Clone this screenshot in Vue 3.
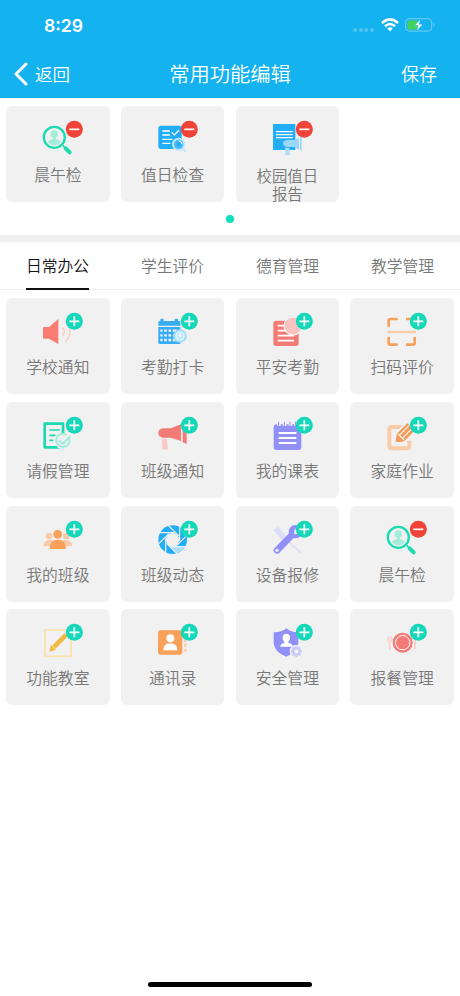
<script setup>
import { h } from 'vue'

const favourites = [
  { name: '晨午检', icon: 'magnifier', added: true },
  { name: '值日检查', icon: 'checklist', added: true },
  { name: '校园值日报告', icon: 'report', added: true },
]

const tabs = ['日常办公', '学生评价', '德育管理', '教学管理']

const features = [
  { name: '学校通知', icon: 'speaker' },
  { name: '考勤打卡', icon: 'calendar' },
  { name: '平安考勤', icon: 'safety' },
  { name: '扫码评价', icon: 'scan' },
  { name: '请假管理', icon: 'leave' },
  { name: '班级通知', icon: 'horn' },
  { name: '我的课表', icon: 'timetable' },
  { name: '家庭作业', icon: 'homework' },
  { name: '我的班级', icon: 'people' },
  { name: '班级动态', icon: 'aperture' },
  { name: '设备报修', icon: 'wrench' },
  { name: '晨午检', icon: 'magnifier', added: true },
  { name: '功能教室', icon: 'classroom' },
  { name: '通讯录', icon: 'contacts' },
  { name: '安全管理', icon: 'shield' },
  { name: '报餐管理', icon: 'meal' },
]

const p = (d, fill) => ['path', { d, fill }]
const s = (d, stroke, w, cap = 'butt') => [
  'path',
  { d, fill: 'none', stroke, 'stroke-width': w, 'stroke-linecap': cap, 'stroke-linejoin': 'round' },
]
const c = (cx, cy, r, fill) => ['circle', { cx, cy, r, fill }]
const o = (cx, cy, r, stroke, w, fill = 'none') => ['circle', { cx, cy, r, fill, stroke, 'stroke-width': w }]
const r = (x, y, width, height, rx, fill) => ['rect', { x, y, width, height, rx, fill }]
const bg = '#f1f1f1'

// Edges of the eight shutter blades, tangent to the central opening.
const blades = Array.from({ length: 8 }, (_, k) => {
  const a = (k * Math.PI) / 4
  const x = 47 + 21 * Math.cos(a)
  const y = 71 + 21 * Math.sin(a)
  const dx = Math.sin(a)
  const dy = -Math.cos(a)
  return `M${x - 5 * dx} ${y - 5 * dy}L${x + 39 * dx} ${y + 39 * dy}`
}).join('')

// All icons are drawn on a 144-unit canvas shown at 48px.
const icons = {
  magnifier: [
    o(37, 64, 31.5, '#1adbb0', 7),
    c(37, 54, 11, '#a3ecda'),
    p('M32 60h10v10c9 2 14 5 14 9q-8 9-19 9t-19-9c0-4 5-7 14-9z', '#a3ecda'),
    s('M62 88l8 8', '#1adbb0', 5),
    s('M71 97l12 12', '#1adbb0', 12, 'round'),
  ],
  checklist: [
    r(4, 29, 70, 70, 8, '#22adf8'),
    s('M16 45h23M16 57h23M16 70h30M16 82h24', '#fff', 4),
    s('M44 49l8 8 14-15', '#fff', 3.5),
    s('M76 97l10 10', '#bfe6ff', 6),
    o(65, 85, 17, '#bfe6ff', 6, '#45b9f8'),
    s('M65 75a10 10 0 0 1 10 10', '#fff', 3),
    c(65, 85, 6, '#22adf8'),
  ],
  report: [
    r(3, 24, 67, 78, 1, '#22adf8'),
    s('M12 47h50M12 56h50M12 65h50', '#fff', 3.5),
    p('M33 80q2-7 13-8h22l13-7v36l-13-8H46q-13-2-13-13z', '#98d6fa'),
    r(84, 64, 5, 39, 0, '#98d6fa'),
    p('M39 95h13l2 22H41z', '#a8dcfa'),
  ],
  speaker: [
    p('M5 57h16l28-24v75L21 92H5q-2 0-2-3V60q0-3 2-3z', '#fa7d74'),
    s('M61 58q12 12 0 25', '#f9cfcc', 5),
    s('M70 41c18 17 18 43 0 59', '#f9cfcc', 5),
  ],
  calendar: [
    p('M4 53V43q0-4 4-4h2v-4q0-3 3-3h4q3 0 3 3v4h33v-4q0-3 3-3h4q3 0 3 3v4h3q4 0 4 4v10z', '#37acf3'),
    p('M4 57h66v51H8q-4 0-4-4z', '#37acf3'),
    s('M10 68h49M10 82h49M10 96h49', bg, 7),
    s('M19 62v42M32 62v42M45 62v42', '#37acf3', 5),
    o(69, 84, 18, '#9edafa', 5, '#c3e9fc'),
    o(69, 84, 12, '#e9f7fd', 2),
    s('M69 76v11', '#fff', 4),
  ],
  safety: [
    r(4, 38, 76, 76, 9, '#f47a76'),
    s('M17 53h23M17 68h28M17 83h49M17 98h49', '#fff', 5),
    o(63, 54, 27, bg, 4, '#fac3c1'),
  ],
  scan: [
    s('M8 56V38q0-5 5-5h22M60 33h21q5 0 5 5v18M8 87v18q0 5 5 5h22M60 110h21q5 0 5-5V87', '#f9a05a', 8),
    s('M4 72h86', '#facba7', 7),
  ],
  leave: [
    s('M8 35h55v71H8z', '#1adbb0', 8),
    s('M22 54h31M22 70h18M22 85h12', '#1adbb0', 5),
    c(64, 88, 25, bg),
    s('M82 80a20 20 0 1 1-11-13', '#9dedd9', 6, 'round'),
    s('M53 87l10 9 20-22', '#9dedd9', 6, 'round'),
  ],
  horn: [
    p('M14 80h15l4 32q-8 3-17-1z', '#facac8'),
    p('M18 49h23l31-12v50l-31-10H18Q4 75 4 63t14-14z', '#f47a76'),
    p('M77 34l12-3v65l-12-5z', '#f47a76'),
  ],
  timetable: [
    r(5, 37, 83, 77, 9, '#9090f6'),
    s('M21 27v15M38 27v15M55 27v15M72 27v15', bg, 11),
    s('M20 29v13M37 29v13M54 29v13M71 29v13', '#9090f6', 3),
    s('M20 63h53M20 78h53M20 93h53', '#fff', 6),
  ],
  homework: [
    s('M70 86v16q0 7-7 7H17q-7 0-7-7V52q0-7 7-7h34', '#facba7', 12),
    p('M24 95l4-32 32-34q5-3 10 2l17 17-34 38q-10 8-29 9z', bg),
    p('M29 89l3-23 32-32 22 22-31 31q-9 4-26 2z', '#f39a58'),
    s('M41 69l28-28M50 78l28-28M35 65l19 19', bg, 3.5),
  ],
  people: [
    c(21, 60, 10, '#fbcba9'),
    c(73, 60, 10, '#fbcba9'),
    p('M5 91q0-20 19-20 10 0 13 8l-13 12zM90 91q0-20-19-20-10 0-13 8l13 12z', '#fbcba9'),
    o(47, 55, 14.5, bg, 3, '#f9a05a'),
    p('M23 99q0-28 24.5-28T72 99z', '#f9a05a'),
  ],
  aperture: [
    c(47, 71, 43, '#22adf8'),
    p('M38 91h47a43 43 0 0 1-27 22z', '#a8defa'),
    c(47, 71, 20, bg),
    s(blades, bg, 3.5),
  ],
  wrench: [
    s('M11 37l26 29', '#dddcf8', 17),
    s('M37 66l48 43', '#dddcf8', 5, 'round'),
    s('M15 103L67 50', '#9090f6', 20, 'round'),
    c(70, 47, 20, '#9090f6'),
    p('M67 44l15-24 16 12-20 22-11 1z', bg),
    c(15, 103, 5, bg),
  ],
  classroom: [
    s('M9 33h78v79H9z', '#fbe1a5', 5),
    s('M34 86l39-39', '#f5b744', 14),
    s('M68 38l15 15', bg, 3),
    p('M27 77l15 15-20 6z', '#f5b744'),
    s('M27 77l14 14', bg, 2),
  ],
  contacts: [
    r(3, 34, 73, 73, 8, '#f9a05a'),
    c(40, 58, 12, '#fff'),
    p('M19 94q0-21 21-21t21 21z', '#fff'),
    r(81, 56, 8, 13, 2, '#fbcba9'),
    r(81, 74, 8, 9, 2, '#fbcba9'),
    r(81, 89, 8, 9, 2, '#fbcba9'),
  ],
  shield: [
    p('M43 28q15 13 36 12v33q-2 27-36 40Q7 100 5 73V40q23 1 38-12z', '#9090f6'),
    p('M43 44q11 0 11 12 0 6-5 12v4q13 2 13 11H25q0-9 12-11v-4q-6-6-5-12 0-12 11-12z', '#fff'),
    c(73, 97, 20, bg),
    o(73, 97, 10, '#c9c8f8', 7),
    s('M73 80v8M73 106v8M56 97h8M82 97h8M61 85l6 6M79 103l6 6M85 85l-6 6M61 109l6-6', '#c9c8f8', 6),
  ],
  meal: [
    c(50, 71, 30, '#f47a76'),
    o(50, 71, 21.5, '#fff', 3),
    s('M6 52v16M11 52v16M16 52v16', '#f9cfcc', 3),
    s('M11 66v26', '#f9cfcc', 5),
    p('M84 91V57q0-7 6-7v41z', '#f9cfcc'),
  ],
}

const FeatureIcon = ({ name, added }) =>
  h('svg', { viewBox: '0 0 144 144', width: 48, height: 48 }, [
    ...icons[name].map(([tag, attrs]) => h(tag, attrs)),
    h('circle', { cx: 97, cy: 40, r: 25.5, fill: added ? '#f04438' : '#15d8ba' }),
    h('path', {
      d: added ? 'M82 40h30' : 'M82 40h30M97 25v30',
      fill: 'none',
      stroke: '#fff',
      'stroke-width': 5,
    }),
  ])
FeatureIcon.props = ['name', 'added']
</script>

<template>
  <main class="screen">
    <header class="header">
      <div class="status">
        <span class="time">8:29</span>
        <div class="indicators">
          <div class="signal"><i v-for="n in 4" :key="n" /></div>
          <svg class="wifi" width="18" height="14" viewBox="0 0 18 14">
            <g fill="none" stroke="#fff" stroke-width="2.5">
              <path d="M1 5Q9-2.2 17 5" />
              <path d="M4 8.2Q9 3.8 14 8.2" />
            </g>
            <path d="M6.2 10.3Q9 8 11.8 10.3L9 13.5z" fill="#fff" />
          </svg>
          <svg width="31" height="14" viewBox="0 0 31 14">
            <rect x=".7" y=".7" width="26" height="12.4" rx="3.5" fill="none" stroke="#77cdf3" />
            <rect x="2.5" y="2.5" width="10.5" height="9" rx="1.8" fill="#43d35c" />
            <path d="M28.5 4.8q2 2 0 4.2z" fill="#77cdf3" />
            <path d="M15.5 1L9.7 7.5h3.5L11.8 13l6-6.8h-3.7z" fill="#fff" stroke="#14b2ef" stroke-width=".5" />
          </svg>
        </div>
      </div>
      <nav class="navbar">
        <div class="back">
          <svg width="14" height="24" viewBox="0 0 14 24">
            <path d="M12 2L2 12l10 10" fill="none" stroke="#fff" stroke-width="3" stroke-linecap="round" stroke-linejoin="round" />
          </svg>
          <span>返回</span>
        </div>
        <h1>常用功能编辑</h1>
        <span class="save">保存</span>
      </nav>
    </header>

    <section class="favourites">
      <div class="grid">
        <div v-for="item in favourites" :key="item.name" class="card">
          <FeatureIcon :name="item.icon" :added="item.added" />
          <span class="label" :class="{ wrapped: item.name.length > 4 }">{{ item.name }}</span>
        </div>
      </div>
      <i class="page-dot" />
    </section>

    <nav class="tabs">
      <div v-for="(tab, i) in tabs" :key="tab" class="tab" :class="{ active: i === 0 }">
        <span>{{ tab }}</span>
      </div>
    </nav>

    <section class="grid features">
      <div v-for="item in features" :key="item.name" class="card">
        <FeatureIcon :name="item.icon" :added="item.added" />
        <span class="label">{{ item.name }}</span>
      </div>
    </section>

    <div class="home-indicator" />
  </main>
</template>

<style>
body {
  margin: 0;
  background: #fff;
}
</style>

<style scoped>
.screen {
  box-sizing: border-box;
  display: flex;
  flex-direction: column;
  width: 460px;
  height: 996px;
  overflow: hidden;
  background: #fff;
  font-family: "Noto Sans CJK SC", sans-serif;
  font-weight: 350;
}
.header {
  flex: none;
  height: 98px;
  background: #14b2ef;
  color: #fff;
}
.status {
  display: flex;
  justify-content: space-between;
  align-items: center;
  height: 50px;
  padding: 0 24px 0 44px;
}
.time {
  padding-top: 2px;
  font: 600 17.6px/50px Inter, sans-serif;
}
.indicators {
  display: flex;
  align-items: center;
}
.signal {
  display: flex;
  gap: 1.7px;
  margin: 9px 7px 0 0;
}
.signal i {
  width: 4px;
  height: 4px;
  border-radius: 50%;
  background: #51c4f2;
}
.wifi {
  margin-right: 6px;
}
.navbar {
  display: grid;
  grid-template-columns: 1fr auto 1fr;
  align-items: center;
  height: 46px;
  padding: 0 23px 0 14px;
}
.back {
  display: flex;
  align-items: center;
  gap: 7px;
  padding-top: 2px;
  font-size: 17.5px;
  line-height: 24px;
}
h1 {
  margin: 0 0 0 9px;
  font-size: 20.3px;
  line-height: 28px;
  font-weight: 350;
}
.save {
  justify-self: end;
  font-size: 18px;
  line-height: 24px;
}
.favourites {
  flex: none;
  box-sizing: border-box;
  height: 144px;
  padding: 8px 6px 0;
  border-bottom: 7px solid #f0f0f0;
}
.grid {
  display: grid;
  grid-template-columns: repeat(4, 103.7px);
  justify-content: space-between;
  row-gap: 7.8px;
}
.card {
  display: flex;
  flex-direction: column;
  align-items: flex-start;
  box-sizing: border-box;
  height: 96px;
  padding-top: 10px;
  border-radius: 6px;
  background: #f1f1f1;
}
.card svg {
  flex: none;
  margin-left: 36px;
}
.label {
  align-self: center;
  width: 66px;
  margin-top: 2px;
  color: #777;
  font-size: 15.8px;
  line-height: 18px;
  text-align: center;
}
.wrapped {
  font-size: 15.4px;
}
.page-dot {
  display: block;
  width: 8px;
  height: 8px;
  margin: 12.5px auto 0;
  border-radius: 50%;
  background: #10dfb9;
}
.tabs {
  flex: none;
  box-sizing: border-box;
  display: grid;
  grid-template-columns: repeat(4, 1fr);
  height: 48px;
  border-bottom: 1px solid #eee;
}
.tab {
  display: flex;
  justify-content: center;
  color: #777;
  font-size: 15.8px;
  line-height: 47px;
}
.tab span {
  box-sizing: border-box;
  height: 48px;
}
.active {
  color: #111;
}
.active span {
  border-bottom: 2.5px solid #111;
}
.features {
  padding: 8px 6px 0;
}
.home-indicator {
  flex: none;
  width: 164px;
  height: 5px;
  margin: auto auto 9.5px;
  border-radius: 3px;
  background: #000;
}
</style>
